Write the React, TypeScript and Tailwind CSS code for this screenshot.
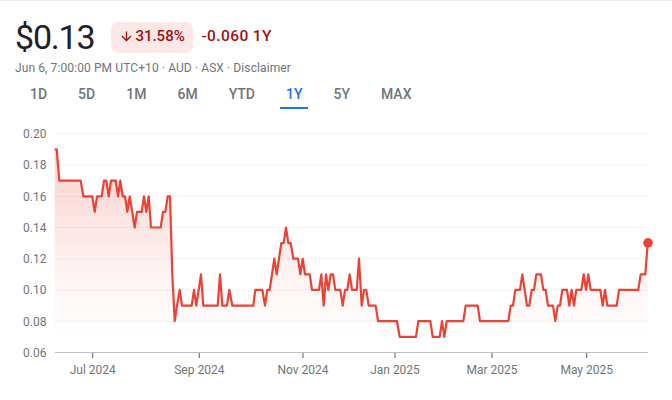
const raw: [number, number][] = [
  [54.7,.19],[56.7,.19],[59.3,.17],[80.7,.17],[83.3,.16],[92.3,.16],[94.7,.15],[97,.16],[101.7,.16],[104,.17],[106.3,.17],[108.7,.16],[111,.17],[115.7,.17],[118,.16],[120.3,.17],[122.7,.16],[125,.16],[127.3,.15],[129.7,.16],[134.7,.14],[137,.15],[141.7,.15],[144,.16],[146.3,.15],[148.7,.16],[151,.14],[160.7,.14],[163,.15],[165.3,.15],[167.7,.16],[170,.16],[172.3,.11],[174.7,.08],[177,.09],[179.7,.10],[182,.09],[191.7,.09],[194,.10],[196.3,.09],[198.7,.10],[201,.11],[203.3,.09],[217.7,.09],[220,.11],[222.3,.09],[227,.09],[229.3,.10],[232.3,.09],
  [253.3,.09],[255.3,.10],[262.3,.10],[265,.09],[267.3,.10],[269.7,.10],[272,.11],[274.3,.12],[276.7,.11],[279,.12],[281.3,.13],[283.7,.13],[286,.14],[288.3,.13],[290.7,.13],[293.3,.12],[298,.12],[300.3,.11],[302.7,.12],[305,.11],[309.7,.11],[312,.10],[319,.10],[321.3,.11],[323.7,.09],[326,.11],[328.3,.10],[330.7,.11],[333,.11],[335.3,.10],[340.3,.10],[342.7,.09],[345,.10],[347.3,.10],[349.7,.11],[352,.10],[356.7,.10],[359,.12],[361.7,.09],[364,.10],[366.3,.10],[368.7,.09],[375.7,.09],[378,.08],[397,.08],[399.7,.07],[416,.07],[418.3,.08],[430.3,.08],[432.7,.07],[439.7,.07],[442,.08],[444.3,.07],[446.7,.08],
  [463.3,.08],[465.7,.09],[477.7,.09],[480,.08],[508.3,.08],[510.7,.09],[513,.09],[515.3,.10],[520,.10],[522.3,.11],[527,.09],[529.3,.09],[531.7,.10],[534,.10],[536.3,.11],[541,.11],[543.3,.10],[545.7,.10],[548,.09],[553,.09],[555.3,.08],[557.7,.09],[560,.09],[562.3,.10],[567,.10],[569.3,.09],[571.7,.10],[574,.09],[576.3,.10],[581.3,.10],[583.7,.11],[586,.10],[588.3,.11],[590.7,.10],[600.3,.10],[602.7,.09],[605,.10],[607.3,.09],[616.7,.09],[619,.10],[638.3,.10],[640.7,.11],[645.3,.11],[647.7,.13],
];

const yOf = (v: number) => 133.8 + ((0.2 - v) / 0.14) * 218.6;
const pts = raw.map(([x, v]) => `${x},${yOf(v).toFixed(1)}`).join(" ");
const area = `54.7,338 ${pts} 647.7,338`;

const yLabels = ["0.20", "0.18", "0.16", "0.14", "0.12", "0.10", "0.08"];
const xLabels: [string, number][] = [
  ["Jul 2024", 92.7],
  ["Sep 2024", 199.3],
  ["Nov 2024", 303],
  ["Jan 2025", 395],
  ["Mar 2025", 492],
  ["May 2025", 586.7],
];
const tabs = ["1D", "5D", "1M", "6M", "YTD", "1Y", "5Y", "MAX"];

export default function App() {
  return (
    <div className="w-[672px] h-[400px] overflow-hidden bg-white border-t border-[#e8eaed] font-['Roboto',sans-serif]">
      <div className="flex items-center h-[34px] mt-[19px] ml-[15px]">
        <span className="text-[34px] leading-none tracking-[-1.2px] text-[#202124]">$0.13</span>
        <span className="flex items-center ml-[17px] h-[31px] w-[82px] rounded-lg bg-[#fce8e6] pl-[8px] pb-[1px] text-[15px] font-medium text-[#a50e0e]">
          <svg viewBox="0 0 24 24" width="15" height="15" fill="currentColor" className="mr-[1px]">
            <path d="M20 12l-1.41-1.41L13 16.17V4h-2v12.17l-5.58-5.59L4 12l8 8 8-8z" />
          </svg>
          31.58%
        </span>
        <span className="ml-[8px] text-[15.5px] font-medium text-[#a50e0e] tracking-[0.4px]">-0.060 1Y</span>
      </div>
      <div className="mt-[6px] ml-[15px] text-[12px] leading-[16px] text-[#70757a] tracking-[0.1px]">
        Jun 6, 7:00:00 PM UTC+10 · AUD · ASX · Disclaimer
      </div>
      <div className="flex gap-[19px] ml-[24px] mt-[9px]">
        {tabs.map((t) => (
          <div
            key={t}
            className={
              t === "1Y"
                ? "px-[6px] pb-[3px] h-[24px] leading-[19px] text-[14px] font-medium text-[#1a73e8] border-b-2 border-[#1a73e8]"
                : "px-[6px] pb-[3px] h-[24px] leading-[19px] text-[14px] font-medium text-[#70757a]"
            }
          >
            {t}
          </div>
        ))}
      </div>
      <svg width="672" height="280" viewBox="0 120 672 280" className="block mt-[11px]">
        <defs>
          <linearGradient id="fade" gradientUnits="userSpaceOnUse" x1="0" y1="149" x2="0" y2="338">
            <stop offset="0" stopColor="#ea4335" stopOpacity="0.25" />
            <stop offset="0.6" stopColor="#ea4335" stopOpacity="0.075" />
            <stop offset="1" stopColor="#ea4335" stopOpacity="0" />
          </linearGradient>
        </defs>
        {yLabels.map((l, i) => {
          const y = 133.8 + i * 31.23;
          return <line key={l} x1="55" x2="648" y1={y} y2={y} stroke="#f1f3f4" strokeWidth="1" />;
        })}
        <polygon points={area} fill="url(#fade)" />
        <polyline points={pts} fill="none" stroke="#ea4335" strokeWidth="2.2" strokeLinejoin="round" />
        <circle cx="648" cy="242.8" r="4.8" fill="#ea4335" />
        <line x1="55" x2="648" y1="352.5" y2="352.5" stroke="#bdc1c6" strokeWidth="1" />
        {[...yLabels, "0.06"].map((l, i) => (
          <text key={l} x="23" y={133.8 + i * 31.23 + 4.4} fontSize="12" fill="#70757a" fontFamily="Roboto, sans-serif">
            {l}
          </text>
        ))}
        {xLabels.map(([l, x]) => (
          <g key={l}>
            <line x1={x} x2={x} y1="353" y2="358" stroke="#70757a" strokeWidth="1.2" />
            <text x={x} y="374" textAnchor="middle" fontSize="12" fill="#70757a" fontFamily="Roboto, sans-serif">
              {l}
            </text>
          </g>
        ))}
      </svg>
    </div>
  );
}
